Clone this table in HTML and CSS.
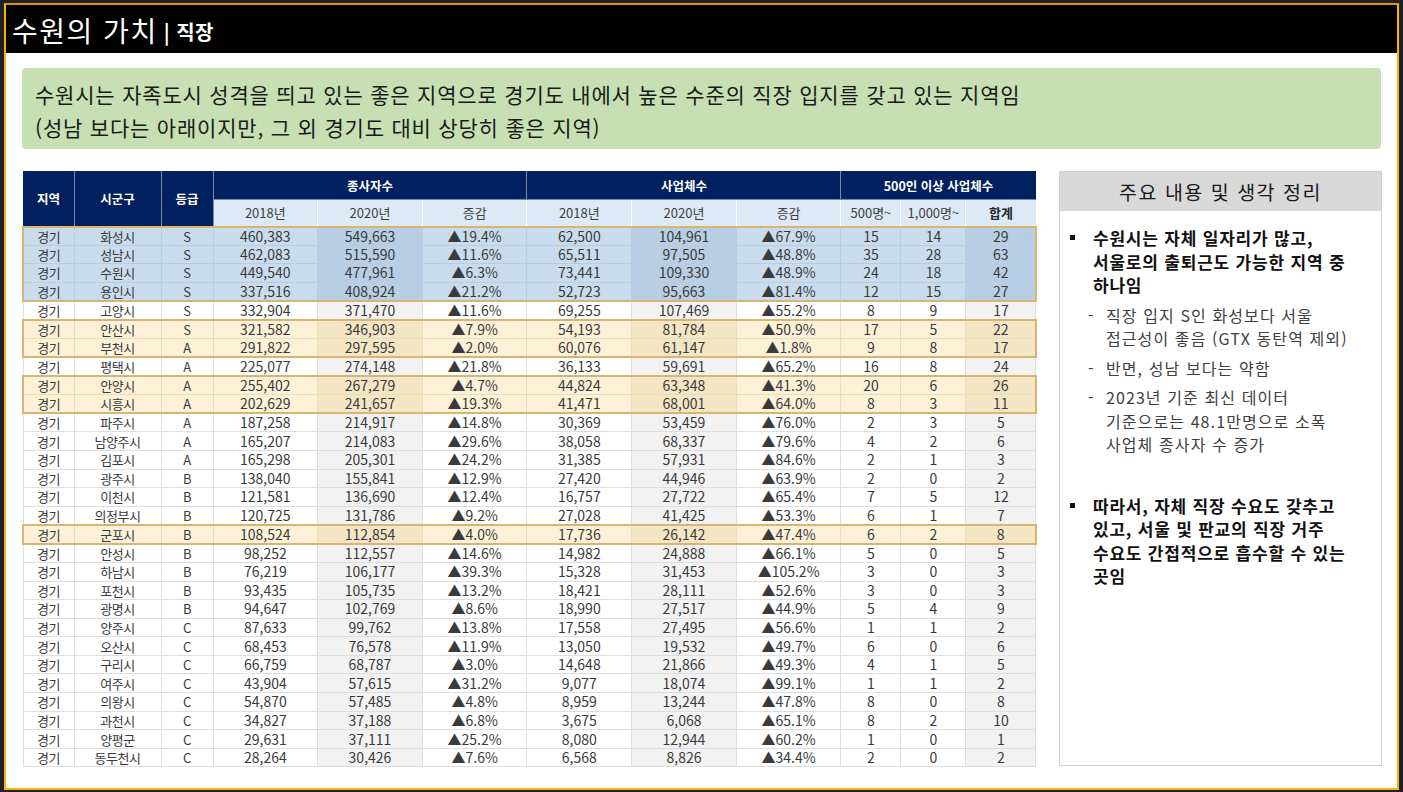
FILE: index.html
```html
<!DOCTYPE html>
<html lang="ko">
<head>
<meta charset="utf-8">
<title>수원의 가치 | 직장</title>
<link rel="stylesheet" href="styles.css">
</head>
<body>
<div class="slide">
  <div class="titlebar">
    <span class="title-main">수원의 가치</span><span class="title-sub">| 직장</span>
  </div>
  <div class="content">
    <div class="summary">
      <p>수원시는 자족도시 성격을 띄고 있는 좋은 지역으로 경기도 내에서 높은 수준의 직장 입지를 갖고 있는 지역임</p>
      <p>(성남 보다는 아래이지만, 그 외 경기도 대비 상당히 좋은 지역)</p>
    </div>
    <div class="main">
      <table class="data">
        <colgroup>
          <col class="c-reg"><col class="c-city"><col class="c-grade">
          <col class="c-num"><col class="c-num"><col class="c-num">
          <col class="c-num"><col class="c-num"><col class="c-num">
          <col class="c-500"><col class="c-1000"><col class="c-sum">
        </colgroup>
        <thead>
          <tr class="h1">
            <th rowspan="2">지역</th><th rowspan="2">시군구</th><th rowspan="2">등급</th>
            <th colspan="3">종사자수</th><th colspan="3">사업체수</th><th colspan="3">500인 이상 사업체수</th>
          </tr>
          <tr class="h2">
            <th>2018년</th><th>2020년</th><th>증감</th><th>2018년</th><th>2020년</th><th>증감</th><th>500명~</th><th>1,000명~</th><th class="b">합계</th>
          </tr>
        </thead>
        <tbody class="hl blue">
          <tr><td class="k">경기</td><td class="k">화성시</td><td class="k">S</td><td>460,383</td><td class="sh">549,663</td><td>▲19.4%</td><td>62,500</td><td class="sh">104,961</td><td>▲67.9%</td><td>15</td><td>14</td><td class="sh">29</td></tr>
          <tr><td class="k">경기</td><td class="k">성남시</td><td class="k">S</td><td>462,083</td><td class="sh">515,590</td><td>▲11.6%</td><td>65,511</td><td class="sh">97,505</td><td>▲48.8%</td><td>35</td><td>28</td><td class="sh">63</td></tr>
          <tr><td class="k">경기</td><td class="k">수원시</td><td class="k">S</td><td>449,540</td><td class="sh">477,961</td><td>▲6.3%</td><td>73,441</td><td class="sh">109,330</td><td>▲48.9%</td><td>24</td><td>18</td><td class="sh">42</td></tr>
          <tr><td class="k">경기</td><td class="k">용인시</td><td class="k">S</td><td>337,516</td><td class="sh">408,924</td><td>▲21.2%</td><td>52,723</td><td class="sh">95,663</td><td>▲81.4%</td><td>12</td><td>15</td><td class="sh">27</td></tr>
        </tbody>
        <tbody>
          <tr><td class="k">경기</td><td class="k">고양시</td><td class="k">S</td><td>332,904</td><td class="sh">371,470</td><td>▲11.6%</td><td>69,255</td><td class="sh">107,469</td><td>▲55.2%</td><td>8</td><td>9</td><td class="sh">17</td></tr>
        </tbody>
        <tbody class="hl yel">
          <tr><td class="k">경기</td><td class="k">안산시</td><td class="k">S</td><td>321,582</td><td class="sh">346,903</td><td>▲7.9%</td><td>54,193</td><td class="sh">81,784</td><td>▲50.9%</td><td>17</td><td>5</td><td class="sh">22</td></tr>
          <tr><td class="k">경기</td><td class="k">부천시</td><td class="k">A</td><td>291,822</td><td class="sh">297,595</td><td>▲2.0%</td><td>60,076</td><td class="sh">61,147</td><td>▲1.8%</td><td>9</td><td>8</td><td class="sh">17</td></tr>
        </tbody>
        <tbody>
          <tr><td class="k">경기</td><td class="k">평택시</td><td class="k">A</td><td>225,077</td><td class="sh">274,148</td><td>▲21.8%</td><td>36,133</td><td class="sh">59,691</td><td>▲65.2%</td><td>16</td><td>8</td><td class="sh">24</td></tr>
        </tbody>
        <tbody class="hl yel">
          <tr><td class="k">경기</td><td class="k">안양시</td><td class="k">A</td><td>255,402</td><td class="sh">267,279</td><td>▲4.7%</td><td>44,824</td><td class="sh">63,348</td><td>▲41.3%</td><td>20</td><td>6</td><td class="sh">26</td></tr>
          <tr><td class="k">경기</td><td class="k">시흥시</td><td class="k">A</td><td>202,629</td><td class="sh">241,657</td><td>▲19.3%</td><td>41,471</td><td class="sh">68,001</td><td>▲64.0%</td><td>8</td><td>3</td><td class="sh">11</td></tr>
        </tbody>
        <tbody>
          <tr><td class="k">경기</td><td class="k">파주시</td><td class="k">A</td><td>187,258</td><td class="sh">214,917</td><td>▲14.8%</td><td>30,369</td><td class="sh">53,459</td><td>▲76.0%</td><td>2</td><td>3</td><td class="sh">5</td></tr>
          <tr><td class="k">경기</td><td class="k">남양주시</td><td class="k">A</td><td>165,207</td><td class="sh">214,083</td><td>▲29.6%</td><td>38,058</td><td class="sh">68,337</td><td>▲79.6%</td><td>4</td><td>2</td><td class="sh">6</td></tr>
          <tr><td class="k">경기</td><td class="k">김포시</td><td class="k">A</td><td>165,298</td><td class="sh">205,301</td><td>▲24.2%</td><td>31,385</td><td class="sh">57,931</td><td>▲84.6%</td><td>2</td><td>1</td><td class="sh">3</td></tr>
          <tr><td class="k">경기</td><td class="k">광주시</td><td class="k">B</td><td>138,040</td><td class="sh">155,841</td><td>▲12.9%</td><td>27,420</td><td class="sh">44,946</td><td>▲63.9%</td><td>2</td><td>0</td><td class="sh">2</td></tr>
          <tr><td class="k">경기</td><td class="k">이천시</td><td class="k">B</td><td>121,581</td><td class="sh">136,690</td><td>▲12.4%</td><td>16,757</td><td class="sh">27,722</td><td>▲65.4%</td><td>7</td><td>5</td><td class="sh">12</td></tr>
          <tr><td class="k">경기</td><td class="k">의정부시</td><td class="k">B</td><td>120,725</td><td class="sh">131,786</td><td>▲9.2%</td><td>27,028</td><td class="sh">41,425</td><td>▲53.3%</td><td>6</td><td>1</td><td class="sh">7</td></tr>
        </tbody>
        <tbody class="hl yel">
          <tr><td class="k">경기</td><td class="k">군포시</td><td class="k">B</td><td>108,524</td><td class="sh">112,854</td><td>▲4.0%</td><td>17,736</td><td class="sh">26,142</td><td>▲47.4%</td><td>6</td><td>2</td><td class="sh">8</td></tr>
        </tbody>
        <tbody>
          <tr><td class="k">경기</td><td class="k">안성시</td><td class="k">B</td><td>98,252</td><td class="sh">112,557</td><td>▲14.6%</td><td>14,982</td><td class="sh">24,888</td><td>▲66.1%</td><td>5</td><td>0</td><td class="sh">5</td></tr>
          <tr><td class="k">경기</td><td class="k">하남시</td><td class="k">B</td><td>76,219</td><td class="sh">106,177</td><td>▲39.3%</td><td>15,328</td><td class="sh">31,453</td><td>▲105.2%</td><td>3</td><td>0</td><td class="sh">3</td></tr>
          <tr><td class="k">경기</td><td class="k">포천시</td><td class="k">B</td><td>93,435</td><td class="sh">105,735</td><td>▲13.2%</td><td>18,421</td><td class="sh">28,111</td><td>▲52.6%</td><td>3</td><td>0</td><td class="sh">3</td></tr>
          <tr><td class="k">경기</td><td class="k">광명시</td><td class="k">B</td><td>94,647</td><td class="sh">102,769</td><td>▲8.6%</td><td>18,990</td><td class="sh">27,517</td><td>▲44.9%</td><td>5</td><td>4</td><td class="sh">9</td></tr>
          <tr><td class="k">경기</td><td class="k">양주시</td><td class="k">C</td><td>87,633</td><td class="sh">99,762</td><td>▲13.8%</td><td>17,558</td><td class="sh">27,495</td><td>▲56.6%</td><td>1</td><td>1</td><td class="sh">2</td></tr>
          <tr><td class="k">경기</td><td class="k">오산시</td><td class="k">C</td><td>68,453</td><td class="sh">76,578</td><td>▲11.9%</td><td>13,050</td><td class="sh">19,532</td><td>▲49.7%</td><td>6</td><td>0</td><td class="sh">6</td></tr>
          <tr><td class="k">경기</td><td class="k">구리시</td><td class="k">C</td><td>66,759</td><td class="sh">68,787</td><td>▲3.0%</td><td>14,648</td><td class="sh">21,866</td><td>▲49.3%</td><td>4</td><td>1</td><td class="sh">5</td></tr>
          <tr><td class="k">경기</td><td class="k">여주시</td><td class="k">C</td><td>43,904</td><td class="sh">57,615</td><td>▲31.2%</td><td>9,077</td><td class="sh">18,074</td><td>▲99.1%</td><td>1</td><td>1</td><td class="sh">2</td></tr>
          <tr><td class="k">경기</td><td class="k">의왕시</td><td class="k">C</td><td>54,870</td><td class="sh">57,485</td><td>▲4.8%</td><td>8,959</td><td class="sh">13,244</td><td>▲47.8%</td><td>8</td><td>0</td><td class="sh">8</td></tr>
          <tr><td class="k">경기</td><td class="k">과천시</td><td class="k">C</td><td>34,827</td><td class="sh">37,188</td><td>▲6.8%</td><td>3,675</td><td class="sh">6,068</td><td>▲65.1%</td><td>8</td><td>2</td><td class="sh">10</td></tr>
          <tr><td class="k">경기</td><td class="k">양평군</td><td class="k">C</td><td>29,631</td><td class="sh">37,111</td><td>▲25.2%</td><td>8,080</td><td class="sh">12,944</td><td>▲60.2%</td><td>1</td><td>0</td><td class="sh">1</td></tr>
          <tr><td class="k">경기</td><td class="k">동두천시</td><td class="k">C</td><td>28,264</td><td class="sh">30,426</td><td>▲7.6%</td><td>6,568</td><td class="sh">8,826</td><td>▲34.4%</td><td>2</td><td>0</td><td class="sh">2</td></tr>
        </tbody>
      </table>
      <aside class="panel">
        <div class="panel-head">주요 내용 및 생각 정리</div>
        <div class="panel-body">
          <div class="point">
            <span class="mark"><i></i></span>
            <div class="point-text">수원시는 자체 일자리가 많고, 서울로의 출퇴근도 가능한 지역 중 하나임</div>
          </div>
          <ul class="subs">
            <li><span class="dash">-</span><span>직장 입지 S인 화성보다 서울 접근성이 좋음 (GTX 동탄역 제외)</span></li>
            <li><span class="dash">-</span><span>반면, 성남 보다는 약함</span></li>
            <li><span class="dash">-</span><span>2023년 기준 최신 데이터 기준으로는 48.1만명으로 소폭 사업체 종사자 수 증가</span></li>
          </ul>
          <div class="point second">
            <span class="mark"><i></i></span>
            <div class="point-text">따라서, 자체 직장 수요도 갖추고 있고, 서울 및 판교의 직장 거주 수요도 간접적으로 흡수할 수 있는 곳임</div>
          </div>
        </div>
      </aside>
    </div>
  </div>
</div>
</body>
</html>
```
FILE: styles.css
```css
* { box-sizing: border-box; }

body {
  margin: 0;
  background: #1f2125;
  font-family: "Noto Sans CJK KR", "Noto Sans", sans-serif;
  color: #222;
}

.slide {
  margin: 3px 0 0 4px;
  width: 1395px;
  height: 787px;
  border: 2px solid #f4b400;
  border-top-color: #e39500;
  background: #fff;
  display: flex;
  flex-direction: column;
}

.titlebar {
  height: 48px;
  flex: none;
  background: #000;
  color: #fff;
  display: flex;
  align-items: center;
  padding: 1px 0 0 6px;
}

.title-main {
  font-size: 28px;
  line-height: 1;
  letter-spacing: 1.5px;
}

.title-sub {
  font-size: 20px;
  font-weight: bold;
  line-height: 1;
  margin-left: 6px;
  padding-top: 5px;
  letter-spacing: 0.5px;
}

.content {
  padding: 15px 16px 0 16px;
}

.summary {
  height: 81px;
  background: #c6e0b4;
  border-radius: 4px;
  padding: 10px 0 0 13px;
}

.summary p {
  margin: 0;
  font-size: 21px;
  line-height: 33px;
  letter-spacing: 0.8px;
  color: #1a1a1a;
}

.main {
  margin-top: 22px;
  display: flex;
  align-items: flex-start;
  gap: 22px;
}

/* ---------- table ---------- */
.data {
  width: 1013px;
  table-layout: fixed;
  border-collapse: collapse;
  flex: none;
}

.c-reg { width: 51px; }
.c-city { width: 87px; }
.c-grade { width: 52px; }
.c-num { width: 104.66px; }
.c-500 { width: 60px; }
.c-1000 { width: 65px; }
.c-sum { width: 70px; }

.data th {
  padding: 0;
  text-align: center;
  font-weight: normal;
}

.h1 th {
  height: 28px;
  background: #002060;
  color: #fff;
  font-weight: bold;
  font-size: 12.5px;
  border: 1px solid #7d87a6;
  border-top-color: #002060;
}

.h1 th:first-child { border-left-color: #002060; }
.h1 th:last-child { border-right-color: #002060; }

.h2 th {
  height: 27px;
  background: #dce9f6;
  color: #404040;
  font-size: 13px;
  border-left: 1px solid #fff;
  border-right: 1px solid #fff;
}

.h2 th:last-child { border-right-color: #dce9f6; }
.h2 th.b { font-weight: bold; color: #262626; }

.data td {
  height: 18.6px;
  padding: 0;
  text-align: center;
  font-size: 14px;
  line-height: 17px;
  color: #3a3a3a;
  border: 1px solid #dedede;
  white-space: nowrap;
}

.data td.k {
  font-size: 13px;
  letter-spacing: -0.4px;
}

.data td.sh { background: #f2f2f2; }

.data tbody.hl { border: 2px solid #dab56f; }

.data tbody.blue td { background: #c9dcee; border-color: #b8cde2; }
.data tbody.blue td.sh { background: #b8cee4; }

.data tbody.yel td { background: #fdf1d8; border-color: #ecdcb8; }
.data tbody.yel td.sh { background: #f4e5c4; }

/* ---------- panel ---------- */
.panel {
  width: 323px;
  height: 595px;
  flex: none;
  border: 1px solid #cfcfcf;
  word-break: keep-all;
}

.panel-head {
  height: 39px;
  background: #d9d9d9;
  display: flex;
  align-items: center;
  justify-content: center;
  font-size: 19.5px;
  letter-spacing: 1.5px;
  color: #1a1a1a;
}

.panel-body {
  padding: 15px 4px 0 9px;
}

.point {
  display: flex;
  align-items: flex-start;
}

.point.second { margin-top: 37px; }

.mark {
  width: 24px;
  height: 23.5px;
  flex: none;
  display: flex;
  align-items: center;
}

.mark i {
  display: block;
  width: 5px;
  height: 5px;
  background: #111;
  margin-left: 1px;
}

.point-text {
  font-size: 17px;
  font-weight: bold;
  line-height: 23.5px;
  letter-spacing: 0.8px;
  color: #111;
}

.subs {
  list-style: none;
  margin: 7px 0 0 0;
  padding: 0 12px 0 19px;
}

.subs li {
  display: flex;
  font-size: 16px;
  line-height: 23.5px;
  letter-spacing: 1.1px;
  color: #404040;
  margin-bottom: 6px;
}

.subs li:last-child { margin-bottom: 0; }

.dash {
  width: 18px;
  flex: none;
}
```
